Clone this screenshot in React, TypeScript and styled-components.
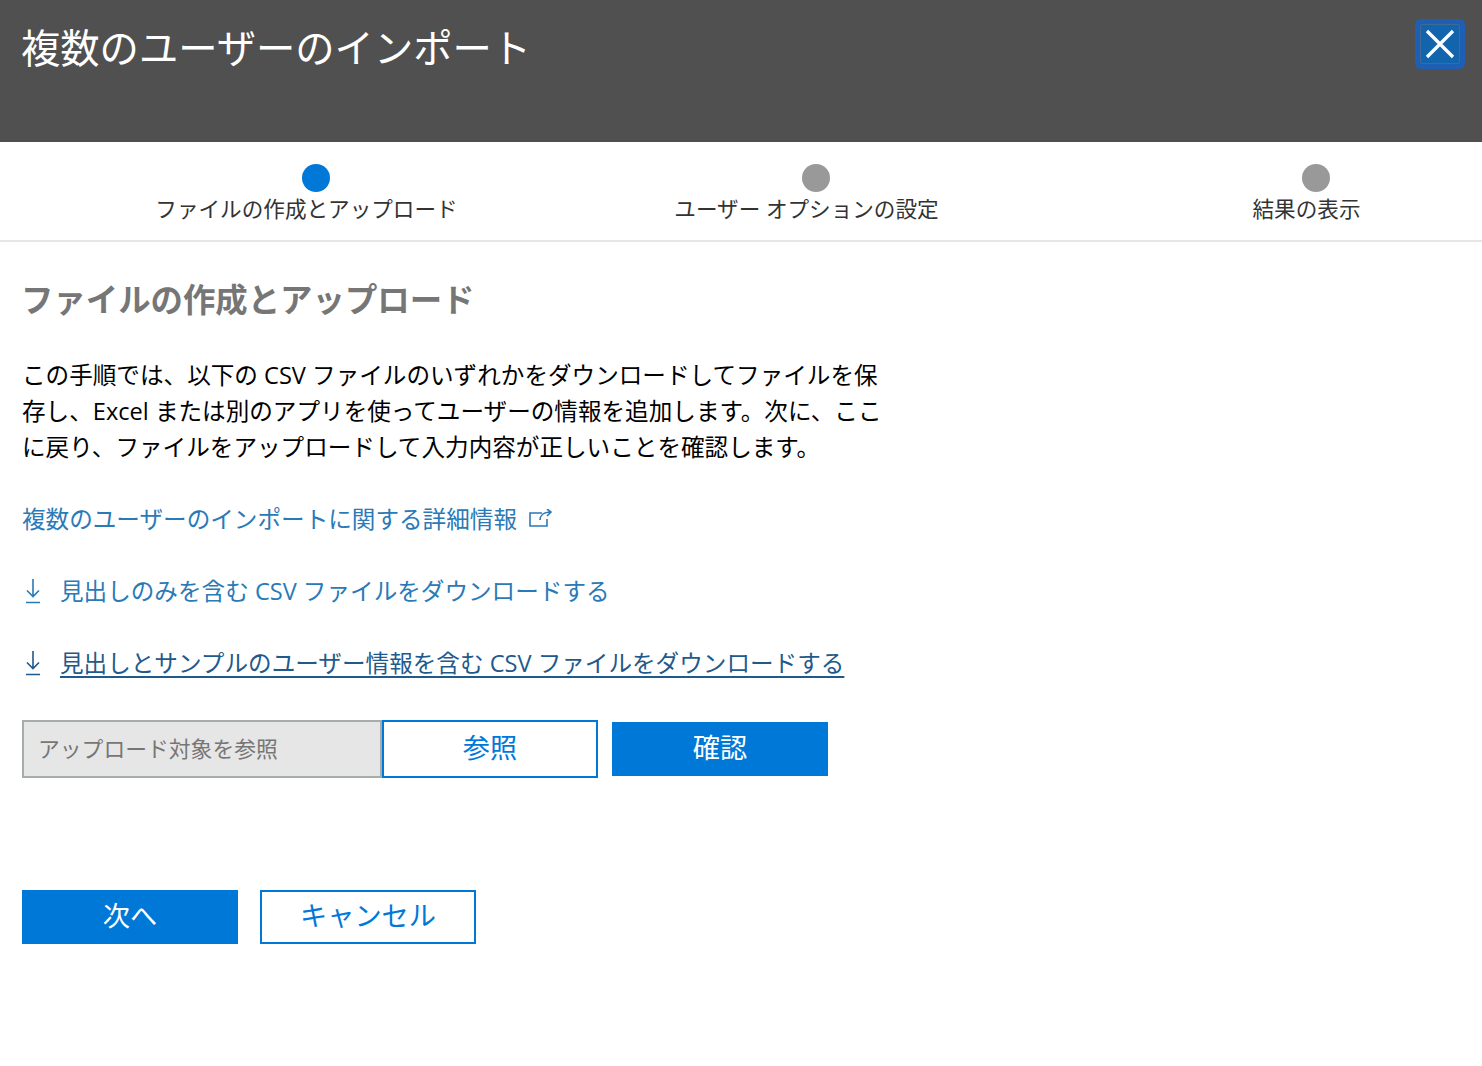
import * as React from 'react';
import styled, { createGlobalStyle } from 'styled-components';

const FONT = `"Open Sans", "Noto Sans", "Noto Sans CJK JP", sans-serif`;

const GlobalStyle = createGlobalStyle`
  html, body {
    margin: 0;
    padding: 0;
    background: #fff;
  }
  body {
    font-family: ${FONT};
  }
  * {
    box-sizing: border-box;
  }
`;

const Page = styled.div`
  width: 1482px;
  height: 1066px;
  overflow: hidden;
  display: flex;
  flex-direction: column;
`;

const Header = styled.header`
  height: 142px;
  flex: none;
  background: #505050;
  display: flex;
  justify-content: space-between;
  align-items: flex-start;
  padding: 20px 22px 0 21px;
`;

const Title = styled.h1`
  margin: 0;
  font-size: 39.3px;
  line-height: 57px;
  font-weight: 400;
  color: #fff;
  white-space: nowrap;
`;

const CloseButton = styled.button`
  width: 40px;
  height: 40px;
  padding: 0;
  margin: 4px 0 0;
  background: #1265ad;
  border: 1px solid #3f6a94;
  box-shadow: 0 0 0 5px #1e5fb3;
  border-radius: 2px;
  display: flex;
  align-items: center;
  justify-content: center;
`;

const Stepper = styled.nav`
  height: 100px;
  flex: none;
  border-bottom: 2px solid #e6e6e6;
  display: grid;
  grid-template-columns: 320px 320px 320px;
  column-gap: 180px;
  padding: 22px 0 0 146.5px;
`;

const Step = styled.div`
  display: flex;
  flex-direction: column;
  align-items: center;
`;

const Dot = styled.span<{ $active?: boolean }>`
  width: 28px;
  height: 28px;
  margin-left: 19px;
  border-radius: 50%;
  background: ${(p) => (p.$active ? '#0078d7' : '#999999')};
`;

const StepLabel = styled.span`
  margin-top: 1px;
  font-size: 21.6px;
  line-height: 32px;
  color: #333;
  white-space: nowrap;
`;

const Main = styled.main`
  flex: 1;
  padding: 33px 0 0 22px;
`;

const Heading = styled.h2`
  margin: 0 0 0 -1px;
  font-size: 32.4px;
  line-height: 48px;
  font-weight: 700;
  color: #767676;
  white-space: nowrap;
`;

const Intro = styled.p`
  margin: 34px 0 0;
  width: 880px;
  font-size: 23.6px;
  line-height: 36px;
  color: #000;
`;

const LinkList = styled.div`
  margin-top: 36px;
  display: flex;
  flex-direction: column;
  gap: 36px;
`;

const LinkRow = styled.a<{ $hover?: boolean }>`
  display: flex;
  align-items: center;
  height: 36px;
  font-size: 23.6px;
  line-height: 36px;
  white-space: nowrap;
  color: ${(p) => (p.$hover ? '#1f5a8c' : '#2a7ab8')};
  svg {
    flex: none;
  }
`;

const LinkText = styled.span<{ $underline?: boolean }>`
  text-decoration: ${(p) => (p.$underline ? 'underline' : 'none')};
  text-underline-offset: 4px;
  text-decoration-thickness: 2px;
`;

const UploadRow = styled.div`
  margin-top: 39px;
  display: flex;
  align-items: center;
`;

const FileField = styled.div`
  width: 360px;
  height: 58px;
  background: #e6e6e6;
  border: 2px solid #a6acac;
  padding: 0 0 4px 14px;
  display: flex;
  align-items: center;
  font-size: 21.8px;
  color: #767676;
  white-space: nowrap;
`;

const Button = styled.button<{ $primary?: boolean; $tall?: boolean }>`
  width: 216px;
  height: ${(p) => (p.$tall ? '58px' : '54px')};
  padding: 0 0 6px;
  font-family: ${FONT};
  font-size: 27.2px;
  background: ${(p) => (p.$primary ? '#0078d7' : '#fff')};
  color: ${(p) => (p.$primary ? '#fff' : '#0078d7')};
  border: 2px solid #0078d7;
  border-radius: 0;
`;

const ConfirmButton = styled(Button)`
  margin-left: 14px;
`;

const Footer = styled.div`
  margin-top: 112px;
  display: flex;
  gap: 22px;
`;

const DownloadIcon = () => (
  <svg width="38" height="26" viewBox="0 0 38 26" fill="none" stroke="currentColor" strokeWidth="1.6">
    <path d="M11 1v17M5 12.5l6 6 6-6M4 24.5h14" />
  </svg>
);

const ExternalIcon = () => (
  <svg width="24" height="20" viewBox="0 0 24 20" fill="none" stroke="currentColor" strokeWidth="1.6" style={{ marginLeft: 12 }}>
    <path d="M13 4H1v13h17V10M11 11c0-4 3-8 11-8M18 0l4 3-4 4" />
  </svg>
);

const App = () => (
  <Page>
    <GlobalStyle />
    <Header>
      <Title>複数のユーザーのインポート</Title>
      <CloseButton aria-label="閉じる">
        <svg width="30" height="30" viewBox="0 0 30 30" stroke="#fff" strokeWidth="3.2" fill="none">
          <path d="M2 2l26 26M28 2L2 28" />
        </svg>
      </CloseButton>
    </Header>
    <Stepper>
      <Step>
        <Dot $active />
        <StepLabel>ファイルの作成とアップロード</StepLabel>
      </Step>
      <Step>
        <Dot />
        <StepLabel>ユーザー オプションの設定</StepLabel>
      </Step>
      <Step>
        <Dot />
        <StepLabel>結果の表示</StepLabel>
      </Step>
    </Stepper>
    <Main>
      <Heading>ファイルの作成とアップロード</Heading>
      <Intro>
        この手順では、以下の CSV ファイルのいずれかをダウンロードしてファイルを保
        <br />
        存し、Excel または別のアプリを使ってユーザーの情報を追加します。次に、ここ
        <br />
        に戻り、ファイルをアップロードして入力内容が正しいことを確認します。
      </Intro>
      <LinkList>
        <LinkRow>
          <LinkText>複数のユーザーのインポートに関する詳細情報</LinkText>
          <ExternalIcon />
        </LinkRow>
        <LinkRow>
          <DownloadIcon />
          <LinkText>見出しのみを含む CSV ファイルをダウンロードする</LinkText>
        </LinkRow>
        <LinkRow $hover>
          <DownloadIcon />
          <LinkText $underline>見出しとサンプルのユーザー情報を含む CSV ファイルをダウンロードする</LinkText>
        </LinkRow>
      </LinkList>
      <UploadRow>
        <FileField>アップロード対象を参照</FileField>
        <Button $tall>参照</Button>
        <ConfirmButton $primary>確認</ConfirmButton>
      </UploadRow>
      <Footer>
        <Button $primary>次へ</Button>
        <Button>キャンセル</Button>
      </Footer>
    </Main>
  </Page>
);

export default App;
